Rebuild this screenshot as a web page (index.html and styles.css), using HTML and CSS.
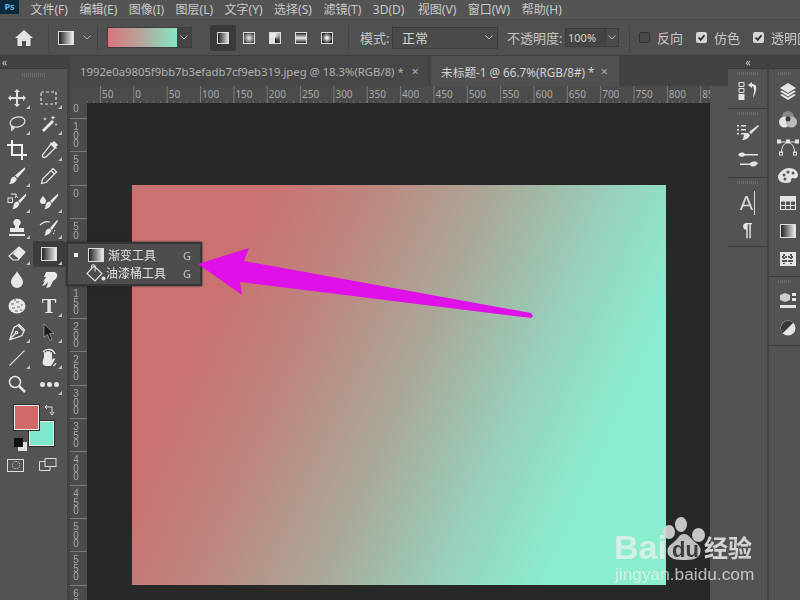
FILE: index.html
```html
<!DOCTYPE html>
<html lang="zh-CN">
<head>
    <meta charset="UTF-8">
    <title>Photoshop - 渐变工具</title>
    <link rel="stylesheet" href="styles.css">
</head>
<body>
<div class="app">
    <div class="menubar">
        <div class="ps-logo">Ps</div>
        <span>文件(F)</span><span>编辑(E)</span><span>图像(I)</span><span>图层(L)</span><span>文字(Y)</span><span>选择(S)</span><span>滤镜(T)</span><span>3D(D)</span><span class="menu-gap">视图(V)</span><span>窗口(W)</span><span>帮助(H)</span>
    </div>

    <div class="options">
        <div class="opt-home">
            <svg width="18" height="16" viewBox="0 0 18 16"><path d="M9 0L0 8h2.500v8h4.500v-5h4v5h4.500V8H18z" fill="#e4e4e4"/></svg>
        </div>
        <div class="opt-tool">
            <div class="grad-icon"></div>
            <svg class="chev" width="8" height="5" viewBox="0 0 8 5"><path d="M.5.500L4 4 7.500.500" fill="none" stroke="#aaa"/></svg>
        </div>
        <div class="grad-picker">
            <div class="grad-preview"></div>
            <div class="grad-drop"><svg width="8" height="5" viewBox="0 0 8 5"><path d="M.5.500L4 4 7.500.500" fill="none" stroke="#ccc"/></svg></div>
        </div>
        <div class="grad-types">
            <div class="grad-type active"><i class="gt gt-linear"></i></div>
            <div class="grad-type"><i class="gt gt-radial"></i></div>
            <div class="grad-type"><i class="gt gt-angle"></i></div>
            <div class="grad-type"><i class="gt gt-reflect"></i></div>
            <div class="grad-type"><i class="gt gt-diamond"></i></div>
        </div>
        <span class="opt-label mode-label">模式:</span>
        <div class="select mode-select">正常<svg width="8" height="5" viewBox="0 0 8 5"><path d="M.5.500L4 4 7.500.500" fill="none" stroke="#bbb"/></svg></div>
        <span class="opt-label opacity-label">不透明度:</span>
        <div class="opacity-box">
            <span>100%</span>
            <div class="opacity-drop"><svg width="8" height="5" viewBox="0 0 8 5"><path d="M.5.500L4 4 7.500.500" fill="none" stroke="#bbb"/></svg></div>
        </div>
        <label class="check first"><i class="box"></i>反向</label>
        <label class="check"><svg class="tick" width="11" height="11" viewBox="0 0 11 11"><rect width="11" height="11" rx="2" fill="#d4d4d4"/><path d="M2.500 5.500l2.200 2.300 3.800-4.600" fill="none" stroke="#2c2c2c" stroke-width="1.800"/></svg>仿色</label>
        <label class="check"><svg class="tick" width="11" height="11" viewBox="0 0 11 11"><rect width="11" height="11" rx="2" fill="#d4d4d4"/><path d="M2.500 5.500l2.200 2.300 3.800-4.600" fill="none" stroke="#2c2c2c" stroke-width="1.800"/></svg>透明区域</label>
    </div>

    <div class="main">
        <div class="tools">
            <div class="strip"><span class="collapse">‹‹</span></div>
            <div class="grip"></div>
            <div class="tool-grid">
                <div class="tool more"><svg width="18" height="18" viewBox="0 0 18 18" fill="#e0e0e0"><path d="M9 0l3 3h-2v5h5V6l3 3-3 3v-2h-5v5h2l-3 3-3-3h2v-5H3v2L0 9l3-3v2h5V3H6z"/></svg></div>
                <div class="tool more"><svg width="18" height="16" viewBox="0 0 18 16"><rect x="1" y="2" width="15" height="12" fill="none" stroke="#e0e0e0" stroke-width="1.200" stroke-dasharray="3 2"/></svg></div>

                <div class="tool more"><svg width="18" height="18" viewBox="0 0 18 18" fill="none" stroke="#e0e0e0" stroke-width="1.300"><ellipse cx="9.500" cy="7" rx="7.500" ry="5" transform="rotate(-12 9.500 7)"/><path d="M4 11c-1 2 0 3 1 3s1-2 0-2-2 2-1 4"/></svg></div>
                <div class="tool more"><svg width="18" height="18" viewBox="0 0 18 18" fill="#e8e8e8"><path d="M12 5l2 2L4 17l-2-2z"/><path d="M13 0l.6 2 2 .6-2 .6-.6 2-.6-2-2-.6 2-.6zM5 2l.5 1.500L7 4l-1.500.5L5 6l-.5-1.500L3 4l1.500-.5zM16 8l.4 1.300 1.300.4-1.300.4-.4 1.300-.4-1.300-1.300-.4 1.300-.4z"/></svg></div>

                <div class="tool"><svg width="20" height="20" viewBox="0 0 20 20" fill="none" stroke="#f0f0f0" stroke-width="2"><path d="M5 0v15h15M0 5h15v15"/></svg></div>
                <div class="tool more"><svg width="18" height="18" viewBox="0 0 18 18"><path d="M11 3l4 4-8 8c-1 1-3 2-4 1s0-3 1-4z" fill="none" stroke="#e8e8e8" stroke-width="1.200"/><path d="M10 2l1-1 1 1 2-2 4 4-2 2 1 1-1 1z" fill="#e8e8e8"/></svg></div>

                <div class="tool more"><svg width="18" height="18" viewBox="0 0 18 18" fill="#e8e8e8"><path d="M16.500.500c1 .5 1 1.500.5 2L9.500 11l-2.500-2.500zM6.500 9.500L9 12c-1 3-4 5-8 5 2-1.500 1-3 2-5 .7-1.500 2-2.500 3.500-2.500z"/></svg></div>
                <div class="tool"><svg width="18" height="18" viewBox="0 0 18 18" fill="none" stroke="#e8e8e8" stroke-width="1.200"><path d="M13 1.500l3.500 3.500L6 15.500 1.500 16.500 2.500 12zM11 3.500L14.500 7"/></svg></div>

                <div class="tool more"><svg width="20" height="18" viewBox="0 0 20 18" fill="#e8e8e8"><path d="M18.500 1c1 .5 1 1.300.5 2L13 10l-2-2zM10.500 8.500l2 2c-.8 3-3.500 5.500-7.500 6 2-1.500 1-3 2-5.500.7-1.500 2-2.500 3.500-2.500z"/><rect x="1" y="5" width="4.500" height="4.500" fill="none" stroke="#e8e8e8"/><path d="M4 1h5v3M8 5L9.500 3 11 5" fill="none" stroke="#e8e8e8"/></svg></div>
                <div class="tool more"><svg width="20" height="18" viewBox="0 0 20 18" fill="#e8e8e8"><path d="M18.500 1c1 .5 1 1.300.5 2L13 10l-2-2zM10.500 8.500l2 2c-.8 3-3.500 5.500-7.500 6 2-1.500 1-3 2-5.500.7-1.500 2-2.500 3.500-2.500z"/><path d="M4 3s3 3.500 3 5a3 3 0 0 1-6 0c0-1.500 3-5 3-5z"/></svg></div>

                <div class="tool more"><svg width="18" height="18" viewBox="0 0 18 18" fill="#e8e8e8"><path d="M9 0a3.500 3.500 0 0 1 2 6.500V9h5v4H2V9h5V6.500A3.500 3.500 0 0 1 9 0zM1 15h16v2H1z"/></svg></div>
                <div class="tool more"><svg width="20" height="18" viewBox="0 0 20 18" fill="#e8e8e8"><path d="M18 1l1 1-6 9-2-2zM10.500 9.500l2 2c-1 2.500-3.500 5-7.500 5 2-1 1-3 2-5 .7-1 2-2 3.500-2z"/><path d="M1 6c3-3 7-4 10-3" fill="none" stroke="#e8e8e8" stroke-width="1.200"/><path d="M16 11l-2 5" stroke="#e8e8e8" stroke-dasharray="1.500 1.500"/></svg></div>

                <div class="tool more"><svg width="20" height="16" viewBox="0 0 20 16"><path d="M12 1l6 5-7 8H6l-4-4z" fill="none" stroke="#e8e8e8" stroke-width="1.200"/><path d="M12 1l6 5-6 7-6-5z" fill="#e8e8e8"/></svg></div>
                <div class="tool more active"><div class="grad-icon"></div></div>

                <div class="tool"><svg width="14" height="18" viewBox="0 0 14 18" fill="#e8e8e8"><path d="M7 0c1 3 6 7 6 11a6 6 0 0 1-12 0C1 7 6 3 7 0z"/></svg></div>
                <div class="tool"><svg width="18" height="18" viewBox="0 0 18 18" fill="#e8e8e8"><path d="M6 1h7c3 0 5 2 4 5-.5 2-3 3-4 4l-3 6-4 1 1-2 1-4-3 3-3 1 3-5-2 1 3-5-2 0z"/></svg></div>

                <div class="tool"><svg width="18" height="16" viewBox="0 0 18 16"><ellipse cx="9" cy="8" rx="8.500" ry="7.500" fill="#e8e8e8"/><path d="M3 6h3M8 4h3M13 7h2M4 10h3M9 9h3M7 13h3M12 12h2M6 2h2" stroke="#666" stroke-width="1.200"/></svg></div>
                <div class="tool more"><span class="type-t">T</span></div>

                <div class="tool more"><svg width="18" height="18" viewBox="0 0 18 18" fill="none" stroke="#e8e8e8" stroke-width="1.300"><path d="M11 1.500l5.500 5.500-2.500 5.500-8 3-4 1 1-4 3-8zM1.500 16.500L7.500 10.500"/><circle cx="8.500" cy="9.500" r="1.200"/><path d="M10 2.500L15.500 8"/></svg></div>
                <div class="tool more"><svg width="12" height="18" viewBox="0 0 12 18"><path d="M1 1l10 9.500H6.500l2.500 6-2 1-2.500-6L1 14z" fill="#1a1a1a" stroke="#d0d0d0" stroke-width=".5"/></svg></div>

                <div class="tool more"><svg width="18" height="18" viewBox="0 0 18 18"><path d="M1.500 16.500L16.500 1.500" stroke="#d8d8d8" stroke-width="1.100"/></svg></div>
                <div class="tool more"><svg width="20" height="20" viewBox="0 0 20 20" fill="#e8e8e8"><path d="M5 9V5a1 1 0 0 1 2 0v3-4a1 1 0 0 1 2 0v4-4a1 1 0 0 1 2 0v4-3a1 1 0 0 1 2 0v7l1.500-1.500c1-.7 2 .3 1.300 1.200L12 18H7c-2 0-3.500-2-3.500-4z"/><path d="M4 4a7 7 0 0 1 12 2M17 15a7 7 0 0 1-3 3" fill="none" stroke="#e8e8e8" stroke-width="1.300"/></svg></div>

                <div class="tool"><svg width="18" height="18" viewBox="0 0 18 18" fill="none" stroke="#e8e8e8"><circle cx="7" cy="7" r="5.500" stroke-width="1.500"/><path d="M11 11l6 6" stroke-width="2.500"/></svg></div>
                <div class="tool more"><div class="dots"><i></i><i></i><i></i></div></div>
            </div>

            <div class="colors">
                <div class="fg-swatch"></div>
                <div class="bg-swatch"></div>
                <svg class="swap" width="11" height="11" viewBox="0 0 11 11" fill="none" stroke="#ddd"><path d="M2 0L0 2l2 2M0 2h7v6M5 7l2 3 2-3"/></svg>
                <div class="mini-colors"></div>
            </div>
            <div class="mode-row">
                <div class="quickmask"><i></i></div>
                <svg width="18" height="14" viewBox="0 0 18 14" fill="none" stroke="#ddd"><rect x="6" y=".5" width="11" height="8"/><path d="M6 3.500H.5v9H11V8.500"/></svg>
            </div>
        </div>

        <div class="docs">
            <div class="tabs">
                <div class="tab">1992e0a9805f9bb7b3efadb7cf9eb319.jpeg @ 18.3%(RGB/8) *<span class="close">×</span></div>
                <div class="tab current">未标题-1 @ 66.7%(RGB/8#) *<span class="close">×</span></div>
            </div>
            <div class="ruler-top">
                <div class="corner"></div>
                <div class="ruler-h">
                    <span>50</span><span>0</span><span>50</span><span>100</span><span>150</span><span>200</span><span>250</span><span>300</span><span>350</span><span>400</span><span>450</span><span>500</span><span>550</span><span>600</span><span>650</span><span>700</span><span>750</span><span>800</span><span>85</span>
                </div>
                <div class="scroll-gap"></div>
            </div>
            <div class="work">
                <div class="ruler-v">
                    <span>0</span><span>100</span><span>50</span><span>0</span><span>50</span><span>100</span><span>150</span><span>200</span><span>250</span><span>300</span><span>350</span><span>400</span><span>450</span><span>500</span><span>550</span><span>60</span>
                </div>
                <div class="pasteboard">
                    <div class="canvas"></div>
                </div>
                <div class="scroll-gap"></div>
            </div>
        </div>

        <div class="panels">
            <div class="panel-col col-a">
                <div class="strip"><span class="collapse">‹‹</span></div>
                <div class="group g-one">
                    <svg width="20" height="18" viewBox="0 0 20 18" fill="#e4e4e4"><path d="M1 .5h5v4H1zM1 6.500h5v4H1z" fill="none" stroke="#e4e4e4"/><path d="M.5 12h6v6h-6zM10 3l4-3v2c4 0 5 3 4 6-.5 3-2 6-3 8 0-3 1.500-6 1-9-.3-2-1-3-2-3v2z"/></svg>
                </div>
                <div class="group g-two">
                    <svg width="22" height="17" viewBox="0 0 22 17" fill="#e4e4e4"><path d="M0 1h2v1.500H0zM4 1h5v1.500H4zM0 5h2v1.500H0zM4 5h5v1.500H4zM0 9h2v1.500H0zM4 9h5v1.500H4zM21 1l1 1-8 8-2-2zM11 9l2 2c-1 3-4 5-8 5 2-1.500 1-3 2-5 1-1.500 2-2 4-2z"/></svg>
                    <svg width="20" height="15" viewBox="0 0 20 15" fill="#e4e4e4"><path d="M0 3c2-3 5-3 7-1h13v1.500H7C5 5.500 2 5 0 3zM20 11c-1 3-6 5-8 2H2v-1.500h10c2-3 7-2 8-.5z"/></svg>
                </div>
                <div class="group g-three">
                    <span class="char-a">A</span>
                    <span class="char-p">¶</span>
                </div>
            </div>
            <div class="panel-col col-b">
                <div class="strip"></div>
                <div class="group g-four">
                    <svg width="18" height="17" viewBox="0 0 18 17" fill="#e4e4e4"><path d="M9 0l8 5-8 5-8-5zM1 8.500l2-1 6 3.500 6-3.500 2 1-8 5zM1 12l2-1 6 3.500 6-3.500 2 1-8 5z"/></svg>
                    <svg width="18" height="17" viewBox="0 0 18 17"><circle cx="9" cy="6" r="6" fill="#888"/><circle cx="5.500" cy="11" r="5.500" fill="#e4e4e4"/><circle cx="12.500" cy="11" r="5.500" fill="#bbb"/><circle cx="9" cy="8" r="2.500" fill="#3a3a3a"/></svg>
                    <svg width="22" height="17" viewBox="0 0 22 17" fill="none" stroke="#e4e4e4"><path d="M3 3h16M11 3C5 5 5 10 4 14M11 3c6 2 6 7 7 11"/><rect x=".5" y="1" width="3" height="3" fill="#e4e4e4"/><rect x="9.500" y="1" width="3" height="3" fill="#e4e4e4"/><rect x="18.500" y="1" width="3" height="3" fill="#e4e4e4"/><rect x="2.500" y="13" width="3" height="3"/><rect x="16.500" y="13" width="3" height="3"/></svg>
                    <svg width="20" height="15" viewBox="0 0 20 15"><path d="M11 0c5 0 9 3 9 7 0 3-3 4-5 3-2 0-2 2-2 3s-2 2-5 2c-5 0-8-3-8-6s5-9 11-9z" fill="#e4e4e4"/><circle cx="6" cy="7" r="1.500" fill="#555"/><circle cx="10" cy="4" r="1.500" fill="#555"/><circle cx="15" cy="5" r="1.500" fill="#555"/><circle cx="7" cy="11" r="1.500" fill="#555"/></svg>
                    <svg width="16" height="14" viewBox="0 0 16 14" fill="none" stroke="#e4e4e4"><rect x=".5" y=".5" width="15" height="13"/><path d="M.5 5h15M.5 9.500h15M5.500.5v13M10.500.5v13"/><path d="M1 1h14v3.500H1z" fill="#e4e4e4"/></svg>
                    <div class="grad-icon panel-grad"></div>
                    <svg width="16" height="14" viewBox="0 0 16 14"><rect width="16" height="14" fill="#e4e4e4"/><path d="M4 2v10M11 2v10M2 5h12M2 9h12" stroke="#555" stroke-width="2" stroke-dasharray="2 1"/></svg>
                </div>
                <div class="group g-five">
                    <svg width="16" height="16" viewBox="0 0 16 16" fill="#e4e4e4"><path d="M5 0l5 2v5l-5 2-5-2V2z" fill="#ccc"/><path d="M12 0h4v3h-4zM12 5h4v3h-4zM0 12h16v3H0z"/></svg>
                    <svg width="16" height="16" viewBox="0 0 16 16"><circle cx="8" cy="8" r="7.500" fill="#e4e4e4"/><path d="M2.700 13.300A7.500 7.500 0 0 1 13.300 2.700z" fill="#3a3a3a"/></svg>
                </div>
            </div>
        </div>
    </div>

    <div class="flyout">
        <div class="fly-row">
            <i class="bullet"></i>
            <div class="grad-icon"></div>
            <span class="fly-name">渐变工具</span>
            <span class="fly-key">G</span>
        </div>
        <div class="fly-row">
            <i class="bullet off"></i>
            <svg width="20" height="18" viewBox="0 0 20 18" fill="none" stroke="#e0e0e0" stroke-width="1.100"><path d="M8 2l8 7.500-7 7.500-8-7.500z"/><path d="M5.500 5V2.500a1.800 1.800 0 0 1 3.600 0v5"/><circle cx="17.500" cy="14.500" r="2" fill="#e0e0e0" stroke="none"/></svg>
            <span class="fly-name">油漆桶工具</span>
            <span class="fly-key">G</span>
        </div>
    </div>

    <svg class="arrow" width="800" height="600" viewBox="0 0 800 600"><polygon points="198,264 249,248 244,261 531,313 533,316 531,318 240,282 242,295" fill="#e010e8"/></svg>

    <div class="watermark">
        <span class="wm-bai">Bai</span>
        <svg class="wm-paw" width="44" height="50" viewBox="0 0 44 50" fill="#d8d8d8"><ellipse cx="6" cy="17" rx="6" ry="7"/><ellipse cx="18" cy="9.500" rx="6" ry="7.500"/><ellipse cx="35.500" cy="20" rx="6.500" ry="7"/><path d="M21 19c5 0 7 5 11 8s7 6 5 12c-2 5-8 6-16 6-8 0-14-1-16-6-2-6 2-9 6-12s5-8 10-8z" fill="#d0d0d0"/></svg>
        <span class="wm-du">du</span>
        <span class="wm-cn">经验</span>
        <span class="wm-url">jingyan.baidu.com</span>
    </div>
</div>
</body>
</html>
```

FILE: styles.css
```css
* {
    margin: 0;
    padding: 0;
    box-sizing: border-box;
}

body {
    font-family: "Noto Sans", "Noto Sans CJK SC", sans-serif;
    font-size: 12px;
    color: #c8c8c8;
    background: #535353;
}

.app {
    position: relative;
    width: 800px;
    height: 600px;
    overflow: hidden;
    display: flex;
    flex-direction: column;
    filter: blur(.4px);
}

/* menu */
.menubar {
    display: flex;
    align-items: center;
    gap: 11.500px;
    height: 19px;
    background: #545454;
    white-space: nowrap;
    line-height: 14px;
}

.ps-logo {
    width: 19px;
    height: 14px;
    margin-top: -5px;
    background: #0d2a3c;
    color: #5cb8ee;
    font-size: 9px;
    font-weight: bold;
    text-align: center;
}

.menu-gap {
    margin-left: 2px;
}

/* options bar */
.options {
    display: flex;
    align-items: center;
    height: 37px;
    background: #505050;
    border-top: 1px solid #444;
    border-bottom: 1px solid #3e3e3e;
    white-space: nowrap;
}

.options > * {
    flex: none;
}

.opt-home {
    display: flex;
    justify-content: center;
    width: 49px;
    border-right: 1px solid #444;
    padding: 4px 0 4px;
}

.opt-tool {
    display: flex;
    align-items: center;
    gap: 9px;
    width: 49px;
    height: 24px;
    padding-left: 9px;
    border-right: 1px solid #444;
}

.grad-icon {
    width: 16px;
    height: 14px;
    border: 1px solid #ddd;
    background: linear-gradient(90deg, #222, #eee);
}

.grad-picker {
    display: flex;
    width: 85px;
    height: 21px;
    margin-left: 9px;
    border: 1px solid #3f3f3f;
}

.grad-preview {
    flex: 1;
    background: linear-gradient(90deg, #d9757c, #b3a79c 50%, #84e6c4);
}

.grad-drop {
    display: flex;
    align-items: center;
    justify-content: center;
    width: 14px;
    background: #444;
}

.grad-types {
    display: flex;
    align-items: center;
    height: 26px;
    margin-left: 18px;
    padding-right: 8px;
    border-right: 1px solid #444;
}

.grad-type {
    display: flex;
    align-items: center;
    justify-content: center;
    width: 26px;
    height: 26px;
}

.grad-type.active {
    background: #3a3a3a;
    border-radius: 2px;
}

.gt {
    display: block;
    width: 12px;
    height: 12px;
    border: 1px solid #ddd;
}

.gt-linear { background: linear-gradient(90deg, #222, #ddd); }
.gt-radial { background: radial-gradient(circle, #eee, #222); }
.gt-angle { background: conic-gradient(#eee, #111 50%, #ddd 50%, #eee); }
.gt-reflect { background: linear-gradient(#222, #eee 50%, #222); }
.gt-diamond { background: radial-gradient(circle, #eee 10%, #222 80%); }

.opt-label {
    color: #c4c4c4;
    font-size: 13px;
}

.mode-label {
    width: 32px;
    margin-left: 11px;
}

.select {
    display: flex;
    align-items: center;
    justify-content: space-between;
    width: 106px;
    height: 22px;
    padding: 0 4px 0 9px;
    background: #4a4a4a;
    border: 1px solid #3c3c3c;
    font-size: 13px;
    color: #d4d4d4;
}

.opacity-label {
    width: 58px;
    margin-left: 9px;
}

.opacity-box {
    display: flex;
    align-items: center;
    height: 19px;
    width: 54px;
    border: 1px solid #3c3c3c;
    background: #4a4a4a;
    color: #d4d4d4;
    font-size: 11px;
}

.opacity-box span {
    width: 39px;
    padding-left: 2px;
    background: #444;
}

.opacity-drop {
    display: flex;
    align-items: center;
    justify-content: center;
    flex: 1;
    height: 100%;
    border-left: 1px solid #3c3c3c;
}

.check {
    display: flex;
    align-items: center;
    gap: 7px;
    margin-left: 13px;
    font-size: 13px;
}

.check.first {
    height: 26px;
    margin-left: 10px;
    padding-left: 9px;
    border-left: 1px solid #444;
}

.box {
    display: block;
    width: 11px;
    height: 11px;
    border: 1px solid #333;
    border-radius: 2px;
    background: #4a4a4a;
}

/* main columns */
.main {
    display: flex;
    flex: 1;
    min-height: 0;
}

.strip {
    display: flex;
    align-items: center;
    justify-content: center;
    height: 13px;
    background: #424242;
    border-bottom: 1px solid #3a3a3a;
}

.collapse {
    font-size: 10px;
    line-height: 10px;
    color: #ccc;
    letter-spacing: -1px;
}

.tools {
    width: 70px;
    flex: none;
    background: #535353;
    border-right: 3px solid #424242;
}

.tools .strip {
    justify-content: flex-start;
    padding-left: 2px;
}

.grip {
    height: 16px;
    padding-top: 4px;
    margin: 0 22px;
    background: repeating-linear-gradient(90deg, #6a6a6a 0 1px, transparent 1px 2px) 0 4px / 100% 4px no-repeat;
}

.tool-grid {
    display: grid;
    grid-template-columns: 32px 32px;
    grid-auto-rows: 26px;
    padding-left: 1px;
}

.tool {
    position: relative;
    display: flex;
    align-items: center;
    justify-content: center;
}

.tool.active {
    background: #3c3c3c;
    border-radius: 2px;
}

.tool.more::after {
    content: "";
    position: absolute;
    right: 3px;
    bottom: 2px;
    border: 2px solid transparent;
    border-right-color: #bbb;
    border-bottom-color: #bbb;
}

.type-t {
    font-family: "Liberation Serif", serif;
    font-size: 22px;
    font-weight: bold;
    color: #e4e4e4;
    line-height: 22px;
}

.dots {
    display: flex;
    gap: 2px;
}

.dots i {
    width: 5px;
    height: 5px;
    border-radius: 50%;
    background: #e4e4e4;
}

.colors {
    position: relative;
    height: 44px;
    margin: 8px 0 0 14px;
}

.fg-swatch,
.bg-swatch {
    position: absolute;
    width: 25px;
    height: 25px;
    border: 1px solid #eee;
    outline: 1px solid #2f2f2f;
}

.fg-swatch {
    left: 0;
    top: 0;
    z-index: 1;
    background: #d06a68;
}

.bg-swatch {
    left: 15px;
    top: 16px;
    background: #80e8cc;
}

.swap {
    position: absolute;
    left: 31px;
    top: 0;
}

.mini-colors {
    position: absolute;
    left: 0;
    top: 33px;
    width: 9px;
    height: 9px;
    background: #111;
    box-shadow: 4px 4px 0 #ddd;
}

.mode-row {
    display: flex;
    align-items: center;
    gap: 15px;
    margin: 9px 0 0 7px;
}

.quickmask {
    display: flex;
    align-items: center;
    justify-content: center;
    width: 17px;
    height: 13px;
    border: 1px solid #ddd;
}

.quickmask i {
    width: 8px;
    height: 8px;
    border: 1px dotted #ddd;
    border-radius: 50%;
}

/* documents */
.docs {
    display: flex;
    flex-direction: column;
    width: 658px;
    flex: none;
}

.tabs {
    display: flex;
    gap: 3px;
    height: 30px;
    background: #424242;
    flex: none;
    color: #b0b0b0;
}

.tab {
    display: flex;
    align-items: center;
    justify-content: space-between;
    width: 358px;
    padding: 0 9px 0 10px;
    background: #474747;
    white-space: nowrap;
    font-size: 11.300px;
}

.tab.current {
    width: 188px;
    padding-right: 11px;
    background: #505050;
    color: #d0d0d0;
    font-size: 11.700px;
}

.close {
    font-size: 13px;
    color: #aaa;
}

.ruler-top {
    display: flex;
    height: 17px;
    flex: none;
}

.corner {
    width: 17px;
    background: #4b4b4b;
}

.ruler-h {
    display: flex;
    width: 623px;
    overflow: hidden;
    padding-left: 13px;
    background-color: #4b4b4b;
    background-image:
        linear-gradient(90deg, #7a7a7a 1px, transparent 1px),
        linear-gradient(90deg, #6e6e6e 1px, transparent 1px);
    background-size: 33.350px 100%, 6.670px 2px;
    background-position: 13px 0, 13px 100%;
    background-repeat: repeat-x;
    font-size: 10px;
    line-height: 17px;
    color: #a8a8a8;
}

.ruler-h span {
    flex: none;
    width: 33.350px;
    padding-left: 2px;
}

.scroll-gap {
    flex: 1;
    background: #535353;
}

.work {
    display: flex;
    flex: 1;
    min-height: 0;
}

.ruler-v {
    display: flex;
    flex-direction: column;
    width: 17px;
    flex: none;
    overflow: hidden;
    background: #4b4b4b;
    font-family: "Liberation Sans", sans-serif;
    font-size: 10px;
    color: #a8a8a8;
}

.ruler-v span {
    flex: none;
    height: 33.350px;
    padding: 3px 6.500px 0 0;
    writing-mode: vertical-rl;
    text-orientation: upright;
    letter-spacing: -2.500px;
    line-height: 10px;
    background: linear-gradient(#7a7a7a, #7a7a7a) 0 0 / 100% 1px no-repeat;
}

.ruler-v span:first-child {
    height: 15px;
    padding-top: 0;
    background: none;
}

.pasteboard {
    width: 623px;
    flex: none;
    background: #282828;
    padding: 82px 0 0 45px;
}

.canvas {
    width: 534px;
    height: 400px;
    background: linear-gradient(114deg, #c97271 19%, #bd8880 35%, #aaa898 51%, #98d0bc 68%, #8aedd0 83%);
}

/* right panels */
.panels {
    display: flex;
    flex: 1;
    background: #424242;
    gap: 2px;
}

.panel-col {
    flex: none;
    background: #535353;
}

.col-a {
    width: 39px;
}

.col-b {
    flex: 1;
}

.group {
    position: relative;
    display: grid;
    grid-auto-rows: 27px;
    justify-items: center;
    align-items: center;
    border-bottom: 1px solid #3a3a3a;
}

.group::before {
    content: "";
    position: absolute;
    top: 3px;
    left: 9px;
    right: 9px;
    height: 3px;
    background: repeating-linear-gradient(90deg, #6a6a6a 0 1px, transparent 1px 2px);
}

.col-b .group {
    padding-left: 6px;
}

.g-one { height: 40px; padding-top: 8px; }
.g-two { height: 69px; padding-top: 10px; }
.g-three { height: 69px; padding-top: 11px; }
.g-four { height: 208px; padding-top: 8px; grid-auto-rows: 28px; }
.g-five { height: 69px; padding-top: 10px; }

.panel-grad {
    height: 14px;
}

.char-a {
    font-family: "Liberation Sans", sans-serif;
    font-size: 20px;
    line-height: 24px;
    color: #d8d8d8;
    border-right: 1px solid #d8d8d8;
    padding-right: 1px;
}

.char-p {
    font-family: "Liberation Sans", sans-serif;
    font-size: 18px;
    line-height: 24px;
    font-weight: bold;
    color: #e4e4e4;
}

/* flyout over the toolbar */
.flyout {
    position: absolute;
    left: 66px;
    top: 242px;
    width: 136px;
    height: 44px;
    padding: 2px 0;
    background: #4d4d4d;
    border: 2px solid #363636;
    box-shadow: 0 0 2px #222;
}

.fly-row {
    display: flex;
    align-items: center;
    height: 18px;
    color: #e0e0e0;
}

.bullet {
    width: 4px;
    height: 4px;
    margin: 0 10px 0 6px;
    background: #eee;
}

.bullet.off {
    margin-right: 8px;
    background: none;
}

.fly-row .grad-icon {
    margin-right: 4px;
}

.fly-row svg {
    flex: none;
}

.fly-name {
    flex: 1;
    white-space: nowrap;
}

.fly-key {
    width: 17px;
    color: #c4c4c4;
    font-size: 11px;
}

.arrow {
    position: absolute;
    left: 0;
    top: 0;
    pointer-events: none;
}

/* watermark */
.watermark {
    position: absolute;
    left: 612px;
    top: 514px;
    width: 170px;
    height: 70px;
    font-family: "Liberation Sans", "Noto Sans CJK SC", sans-serif;
    color: rgba(240, 240, 240, .72);
}

.watermark span,
.wm-paw {
    position: absolute;
    white-space: nowrap;
}

.wm-bai {
    left: 2px;
    top: 16px;
    font-size: 34px;
    line-height: 34px;
    font-weight: bold;
}

.wm-paw {
    left: 51px;
    top: 1px;
    opacity: .9;
}

.wm-du {
    left: 60px;
    top: 25px;
    font-size: 22px;
    line-height: 22px;
    font-weight: bold;
    color: #3c3c3c;
}

.wm-cn {
    left: 92px;
    top: 18px;
    font-family: "Noto Sans CJK SC", sans-serif;
    font-size: 24px;
    line-height: 30px;
    font-weight: bold;
    color: rgba(225, 225, 225, .9);
}

.wm-url {
    left: 3px;
    top: 50px;
    font-size: 17.300px;
    line-height: 20px;
}
```
